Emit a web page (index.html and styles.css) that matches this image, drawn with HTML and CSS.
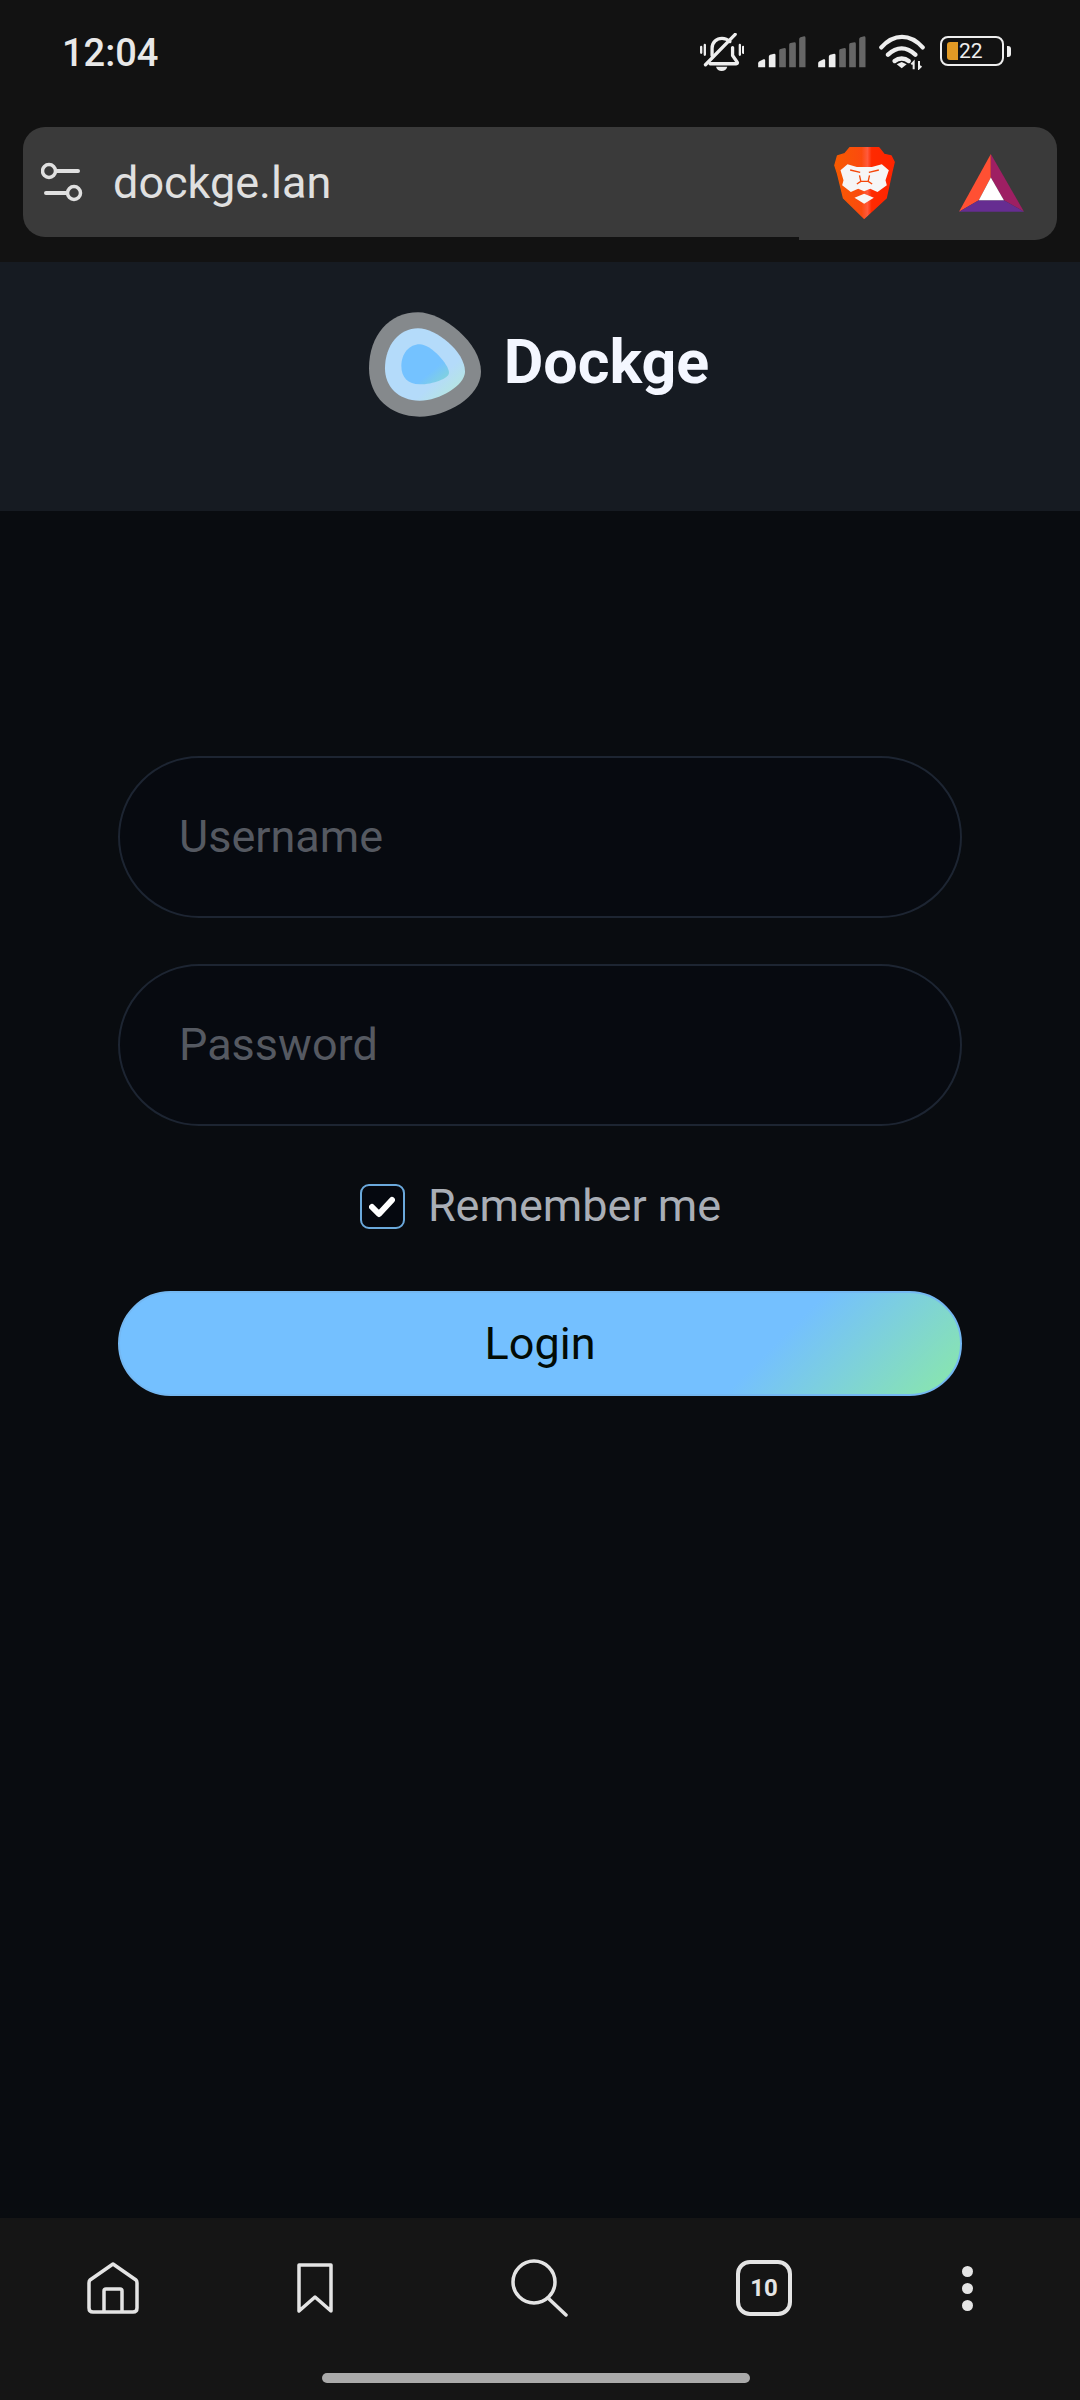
FILE: index.html
```html
<!DOCTYPE html>
<html lang="en">
<head>
    <meta charset="UTF-8">
    <meta name="viewport" content="width=device-width, initial-scale=1.0">
    <title>Dockge</title>
    <link rel="stylesheet" href="styles.css">
</head>
<body>
    <div id="top">
        <div class="status">
            <span class="time">12:04</span>
            <div class="status-icons">
                <svg class="ic-bell" viewBox="120 98 132 118">
                    <path d="M123 140v18M134 134v30M240 134v30M250 140v18" stroke="#eee" stroke-width="7" stroke-linecap="round" fill="none"/>
                    <path d="M156 166v-22c0-18 14-30 30-30 10 0 18 4 24 10M218 142v24l14 20c2 3 0 5-3 5H150" stroke="#eee" stroke-width="10" fill="none" stroke-linecap="round" stroke-linejoin="round"/>
                    <path d="M136 194L226 102" stroke="#eee" stroke-width="10" stroke-linecap="round"/>
                    <path d="M168 200h34c-3 17-31 17-34 0z" fill="#eee"/>
                </svg>
                <svg class="ic-signal" viewBox="295 108 143 96">
                    <path d="M295 202v-12q0-4 4-6l12-6q5-2 5 3v21z" fill="#eee"/>
                    <path d="M327 202v-32q0-4 4-6l12-3q4 0 4 4v37z" fill="#eee"/>
                    <path d="M358 202v-50q0-4 4-5l12-3q4 0 4 4v54zM388 202v-68q0-4 4-5l12-2q4 0 4 4v71zM418 202v-84q0-4 4-6l11-3q4 0 4 4v89z" fill="#666"/>
                </svg>
                <svg class="ic-signal" viewBox="295 108 143 96">
                    <path d="M295 202v-12q0-4 4-6l12-6q5-2 5 3v21z" fill="#eee"/>
                    <path d="M327 202v-32q0-4 4-6l12-3q4 0 4 4v37z" fill="#eee"/>
                    <path d="M358 202v-50q0-4 4-5l12-3q4 0 4 4v54zM388 202v-68q0-4 4-5l12-2q4 0 4 4v71zM418 202v-84q0-4 4-6l11-3q4 0 4 4v89z" fill="#666"/>
                </svg>
                <svg class="ic-wifi" viewBox="657 103 138 108">
                    <path d="M664 143c38-42 86-42 124 0M684 165c26-25 56-25 82 0M704 184c12-10 30-10 42 0" stroke="#eee" stroke-width="13" fill="none" stroke-linecap="round"/>
                    <path d="M710 194l15-7 15 7-15 12z" fill="#eee"/>
                    <path d="M761 209v-22l-7 7M777 184v22l7-7" stroke="#eee" stroke-width="6" fill="none"/>
                </svg>
                <div class="battery">
                    <div class="batt-body">
                        <span class="batt-fill"></span>
                        <span class="batt-num">22</span>
                    </div>
                    <span class="batt-nub"></span>
                </div>
            </div>
        </div>
        <div class="urlbar">
            <svg class="ic-sliders" viewBox="0 0 42 40">
                <circle cx="8" cy="9" r="6.5" stroke="#e0e0e0" stroke-width="3.5" fill="none"/>
                <path d="M15 9h22M5 31h20" stroke="#e0e0e0" stroke-width="4" stroke-linecap="round"/>
                <circle cx="33" cy="31" r="6.5" stroke="#e0e0e0" stroke-width="3.5" fill="none"/>
            </svg>
            <span class="url">dockge.lan</span>
            <svg class="ic-brave" viewBox="522 445 182 216">
                <defs>
                    <linearGradient id="bg1" x1="0" x2="1" y1="0" y2="0">
                        <stop offset="0" stop-color="#f75a00"/>
                        <stop offset="0.45" stop-color="#fb4a0e"/>
                        <stop offset="0.55" stop-color="#ff5a3c"/>
                        <stop offset="0.62" stop-color="#ff2a00"/>
                        <stop offset="1" stop-color="#ff2400"/>
                    </linearGradient>
                </defs>
                <path d="M569 447H656L672 467L693 472L702 490L695 520L678 598L612 659L550 598L532 525L524 500L532 472L554 465Z" fill="url(#bg1)" stroke="url(#bg1)" stroke-width="4" stroke-linejoin="round"/>
                <path d="M541 515L562 497L590 505H635L665 497L686 515L676 545L680 560L652 580L630 570L612 578L594 570L572 580L546 560L550 545Z" fill="#f6f6f6"/>
                <path d="M570 514L600 521M656 514L626 521M598 530L602 548H624L628 530M602 548L590 556M624 548L636 556" stroke="#f5480a" stroke-width="4" fill="none"/>
                <path d="M583 597L612 585L641 597L612 615Z" fill="#f6f6f6"/>
            </svg>
            <svg class="ic-bat" viewBox="898 465 194 173">
                <path d="M993 465L898 637L957 603L993 535Z" fill="#ff5033"/>
                <path d="M993 465L1092 637L1032 603L993 535Z" fill="#9e1f63"/>
                <path d="M898 637H1092L1032 603H957Z" fill="#662d91"/>
                <path d="M993 535L1032 603H957Z" fill="#fff"/>
            </svg>
        </div>
    </div>

    <div id="header">
        <svg class="logo" viewBox="88 97 336 313">
            <defs>
                <linearGradient id="lg1" x1="0" y1="0" x2="1" y2="1">
                    <stop offset="0" stop-color="#b4dbfa"/>
                    <stop offset="0.68" stop-color="#b4dbfa"/>
                    <stop offset="1" stop-color="#b6ecd2"/>
                </linearGradient>
                <linearGradient id="lg2" x1="0" y1="0" x2="1" y2="1">
                    <stop offset="0" stop-color="#74c2ff"/>
                    <stop offset="0.65" stop-color="#74c2ff"/>
                    <stop offset="1" stop-color="#86d8d0"/>
                </linearGradient>
            </defs>
            <path d="M88 265C88 165 150 97 235 97C310 97 424 190 424 275C424 350 320 410 240 410C150 410 88 350 88 265Z" fill="#85898c"/>
            <path d="M136 265C136 195 180 145 235 145C290 145 376 215 376 275C376 315 300 362 240 362C175 362 136 320 136 265Z" fill="url(#lg1)"/>
            <path d="M185 258C185 220 210 193 240 193C275 193 328 255 328 278C328 295 280 313 240 313C205 313 185 292 185 258Z" fill="url(#lg2)"/>
        </svg>
        <span class="title">Dockge</span>
    </div>

    <div id="main">
        <form class="login">
            <input class="field" type="text" placeholder="Username">
            <input class="field" type="password" placeholder="Password">
            <label class="remember">
                <span class="check">
                    <svg viewBox="0 0 26 22"><path d="M3 11l7 7L23 4" stroke="#fff" stroke-width="6" fill="none" stroke-linecap="round" stroke-linejoin="round"/></svg>
                </span>
                <span class="remember-text">Remember me</span>
            </label>
            <button class="btn" type="button">Login</button>
        </form>
    </div>

    <div id="nav">
        <div class="nav-icons">
            <svg class="ic-home" viewBox="0 0 52 52">
                <path d="M26 2L3 18q-1 1-1 3v25q0 4 4 4h40q4 0 4-4V21q0-2-1-3Z" stroke="#e4e4e4" stroke-width="3.5" fill="none" stroke-linejoin="round"/>
                <path d="M17 50V29q0-2 2-2h14q2 0 2 2v21" stroke="#e4e4e4" stroke-width="3.5" fill="none"/>
            </svg>
            <svg class="ic-mark" viewBox="0 0 36 50">
                <path d="M2 2H34V48L18 34L2 48Z" stroke="#e4e4e4" stroke-width="3.5" fill="none" stroke-linejoin="round"/>
            </svg>
            <svg class="ic-search" viewBox="0 0 58 58">
                <circle cx="23" cy="23" r="21" stroke="#e4e4e4" stroke-width="3.5" fill="none"/>
                <path d="M37 39L55 56" stroke="#e4e4e4" stroke-width="3.5" stroke-linecap="round"/>
            </svg>
            <div class="tabs">10</div>
            <div class="dots"><span></span><span></span><span></span></div>
        </div>
        <div class="homebar"></div>
    </div>
</body>
</html>
```

FILE: styles.css
```css
* {
    box-sizing: border-box;
}
body {
    margin: 0;
    width: 1080px;
    height: 2400px;
    display: flex;
    flex-direction: column;
    background: #090c10;
    font-family: Roboto, "Liberation Sans", sans-serif;
}

/* status bar + browser url bar */
#top {
    height: 262px;
    background: #121212;
    flex: none;
}
.status {
    height: 127px;
    display: flex;
    justify-content: space-between;
    padding: 0 69px 0 62px;
}
.time {
    font-size: 38px;
    font-weight: 500;
    color: #e8e8e8;
    margin-top: 31px;
    line-height: 45px;
}
.status-icons {
    display: flex;
    align-items: flex-start;
    padding-top: 33px;
}
.status-icons svg {
    display: block;
}
.ic-bell {
    width: 44px;
    height: 39px;
    margin-right: 14px;
}
.ic-signal {
    width: 48px;
    height: 32px;
    margin-top: 3px;
    margin-right: 12px;
}
.ic-wifi {
    width: 46px;
    height: 36px;
    margin-left: 1px;
    margin-right: 15px;
    margin-top: 1px;
}
.battery {
    display: flex;
    align-items: center;
    margin-top: 3px;
}
.batt-body {
    width: 64px;
    height: 30px;
    border: 2px solid #eee;
    border-radius: 8px;
    display: flex;
    align-items: center;
    padding-left: 5px;
}
.batt-fill {
    width: 11px;
    height: 18px;
    background: #e29a25;
    border-radius: 3px 0 0 3px;
}
.batt-num {
    font-size: 21px;
    color: #eee;
    margin-left: 1px;
    line-height: 24px;
}
.batt-nub {
    width: 4px;
    height: 11px;
    margin-left: 3px;
    background: #eee;
    border-radius: 0 3px 3px 0;
}

.urlbar {
    position: relative;
    height: 110px;
    margin: 0 23px 0 23px;
    background: #3a3a3a;
    border-radius: 22px;
    display: flex;
    align-items: center;
    padding-left: 18px;
}
.urlbar:after {
    content: "";
    position: absolute;
    right: 0;
    bottom: -3px;
    width: 258px;
    height: 40px;
    background: #3a3a3a;
    border-radius: 0 0 22px 0;
}
.ic-sliders {
    width: 42px;
    height: 40px;
    flex: none;
}
.url {
    font-size: 45px;
    color: #e0e0e0;
    margin-left: 30px;
}
.ic-brave {
    position: relative;
    z-index: 1;
    width: 61px;
    height: 72px;
    margin-left: auto;
    margin-top: 1px;
}
.ic-bat {
    position: relative;
    z-index: 1;
    width: 65px;
    height: 58px;
    margin-left: 64px;
    margin-right: 33px;
    margin-top: 2px;
}

/* dockge header */
#header {
    height: 249px;
    flex: none;
    background: #161b22;
    display: flex;
    justify-content: center;
    align-items: flex-start;
    padding: 50px 2px 0 0;
}
.logo {
    width: 112px;
    height: 105px;
}
.title {
    font-size: 61px;
    font-weight: 700;
    color: #f4f7ff;
    margin-left: 23px;
    line-height: 70px;
    margin-top: 15px;
}

#main {
    flex: 1;
    padding: 245px 118px 0;
}
.login {
    display: flex;
    flex-direction: column;
}
.field {
    display: block;
    width: 100%;
    height: 162px;
    margin-bottom: 46px;
    padding: 0 60px 2px 59px;
    background: #070a10;
    border: 2px solid #1d2532;
    border-radius: 81px;
    font: 45px Roboto, sans-serif;
    color: #fff;
    outline: none;
}
.field::placeholder {
    color: #555961;
    opacity: 1;
}
.field:nth-of-type(2) {
    margin-bottom: 58px;
}
.remember {
    display: flex;
    align-items: center;
    justify-content: center;
    font-size: 45px;
    color: #a9aeb6;
    height: 45px;
    margin: 0 0 62px;
}
.remember-text {
    margin-left: 23px;
    margin-top: -2px;
}
.check {
    width: 45px;
    height: 45px;
    margin-left: 1px;
    background: #05080f;
    border: 2px solid #6ba9dc;
    border-radius: 9px;
    display: flex;
    align-items: center;
    justify-content: center;
}
.check svg {
    width: 26px;
    height: 22px;
}
.btn {
    height: 105px;
    border: 2px solid #74b8f2;
    border-radius: 53px;
    background: linear-gradient(135deg, #74c0ff 0%, #74c0ff 75%, #8ae8a8 100%);
    font: 45px Roboto, sans-serif;
    color: #020b05;
    padding-bottom: 2px;
}

/* browser bottom bar */
#nav {
    height: 182px;
    flex: none;
    background: #151515;
    padding-top: 41px;
}
.nav-icons {
    display: grid;
    grid-template-columns: 202px 202px 248px 200px 206px;
    height: 56px;
    padding-left: 12px;
    justify-items: center;
    align-items: center;
}
.ic-home {
    width: 52px;
    height: 52px;
}
.ic-mark {
    width: 36px;
    height: 50px;
}
.ic-search {
    width: 58px;
    height: 58px;
}
.tabs {
    width: 56px;
    height: 56px;
    border: 4px solid #e4e4e4;
    border-radius: 14px;
    display: flex;
    align-items: center;
    justify-content: center;
    font-size: 24px;
    font-weight: 700;
    color: #e4e4e4;
}
.dots {
    display: flex;
    flex-direction: column;
    gap: 6px;
}
.dots span {
    width: 11px;
    height: 11px;
    background: #e4e4e4;
    border-radius: 50%;
}
.homebar {
    width: 428px;
    height: 10px;
    margin: 58px 0 0 322px;
    background: #aaa;
    border-radius: 5px;
}
```
